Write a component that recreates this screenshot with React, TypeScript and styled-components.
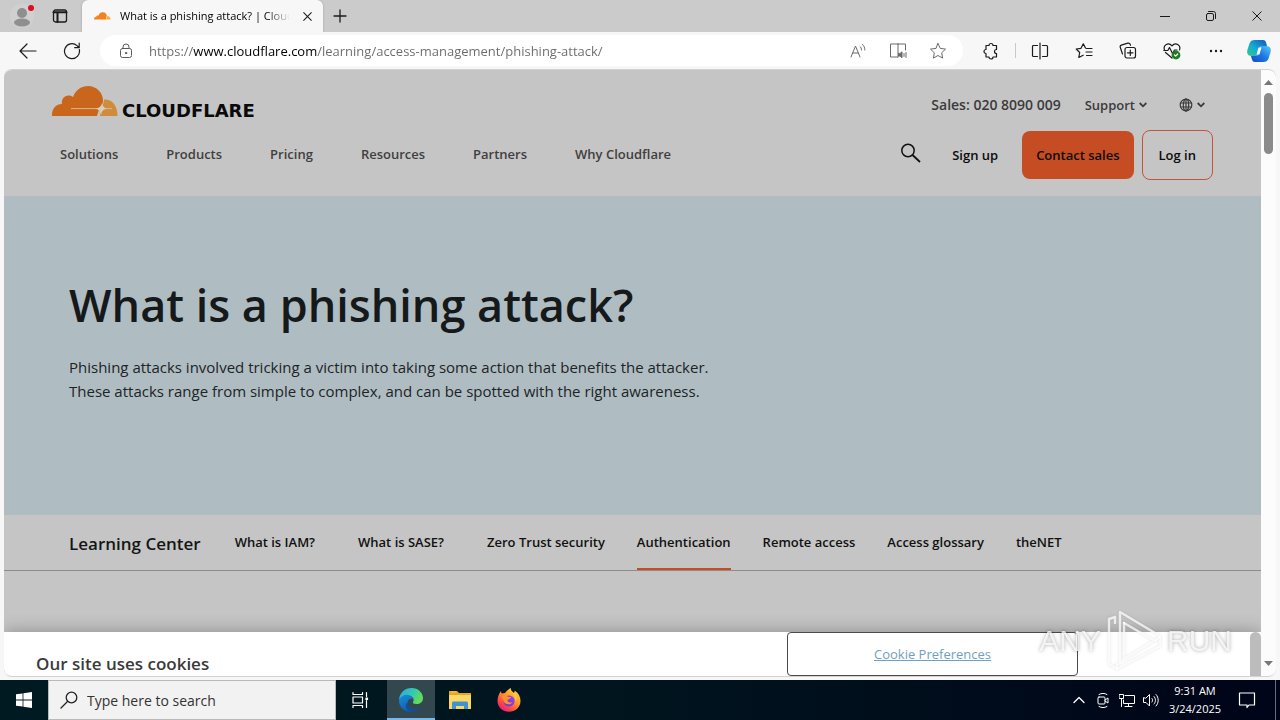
import React from "react";
import styled, { createGlobalStyle } from "styled-components";

const GlobalStyle = createGlobalStyle`
  * { box-sizing: border-box; }
  body { margin: 0; font-family: "Open Sans", "Noto Sans", sans-serif; color: #1a1a1a; }
  button, input { font: inherit; color: inherit; }
  button { border: 0; padding: 0; background: none; }
  a { color: inherit; text-decoration: none; }
  svg { display: block; flex: none; }
`;

const Desktop = styled.div`
  display: flex;
  flex-direction: column;
  height: 100vh;
  overflow: hidden;
  background: #f7f7f7;
`;

/* ---------- browser chrome ---------- */

const TabStrip = styled.header`
  display: flex;
  flex: none;
  height: 32px;
  background: #cbcbcb;
`;

const ChromeButton = styled.button<{ $width?: number; $color?: string }>`
  display: flex;
  flex: none;
  align-items: center;
  justify-content: center;
  width: ${(p) => p.$width ?? 44}px;
  color: ${(p) => p.$color ?? "#1b1b1b"};
`;

const Tab = styled.div`
  display: flex;
  flex: none;
  align-items: center;
  gap: 9px;
  width: 241px;
  padding: 0 8px 0 12px;
  border-radius: 6px 6px 0 0;
  background: #f7f7f7;
  box-shadow: 0 0 2px #9a9a9a;
`;

const TabTitle = styled.span`
  flex: 1;
  min-width: 0;
  white-space: nowrap;
  font-size: 11px;
  line-height: 16px;
  color: #000;
  mask-image: linear-gradient(90deg, #000 86%, transparent);
`;

const WindowControls = styled.div`
  display: flex;
  margin-left: auto;
`;

const Toolbar = styled.div`
  display: flex;
  flex: none;
  align-items: stretch;
  height: 37px;
  padding: 3px 0 3px 6px;
  background: #f7f7f7;
`;

const AddressBar = styled.form`
  display: flex;
  flex: 1;
  min-width: 0;
  align-items: center;
  margin: 0 6px;
  padding: 0 5px 0 17px;
  border-radius: 16px;
  background: #fff;
  color: #5a5a5a;
`;

const AddressInput = styled.input`
  flex: 1;
  min-width: 0;
  height: 24px;
  margin-left: 14px;
  padding: 0;
  border: 0;
  outline: 0;
  font-size: 13px;
  color: #111;
  background: linear-gradient(90deg, #6a6a6a 44px, #000 44px, #000 168px, #6a6a6a 168px);
  background-clip: text;
  -webkit-background-clip: text;
  -webkit-text-fill-color: transparent;
`;

const AddressActions = styled.div`
  display: flex;
  align-self: stretch;
`;

const Divider = styled.span`
  width: 1px;
  margin: 8px 2px;
  background: #c9c9c9;
`;

/* ---------- web page ---------- */

const Viewport = styled.div`
  display: flex;
  flex: 1;
  min-height: 0;
  margin: 0 4px 3px;
  border: 1px solid #d2d2d4;
  border-width: 1px 0;
  border-radius: 8px;
  overflow: hidden;
  background: #fcfcfc;
`;

const Page = styled.div`
  position: relative;
  flex: 1;
  min-width: 0;
  overflow: hidden;
  background: #c5c5c5;
`;

const ScrollTrack = styled.div`
  display: flex;
  flex: none;
  flex-direction: column;
  align-items: center;
  width: 15px;
  padding: 8px 0 9px;
`;

const ScrollThumb = styled.span`
  width: 9px;
  height: 61px;
  margin: 7px 0 auto;
  border-radius: 5px;
  background: #8b8b8b;
`;

const SiteHeader = styled.div`
  height: 126px;
  padding: 15px 48px 0;
`;

const HeaderRow = styled.div<{ $height: number }>`
  display: flex;
  align-items: center;
  justify-content: space-between;
  height: ${(p) => p.$height}px;
`;

const Logo = styled.a`
  display: flex;
  align-items: flex-end;
  gap: 4px;
  height: 32px;
`;

const Wordmark = styled.span`
  font-family: "DejaVu Sans", sans-serif;
  font-size: 18px;
  font-weight: 700;
  line-height: 12px;
  color: #0a0a0a;
`;

const Utility = styled.div`
  display: flex;
  align-items: center;
  gap: 24px;
  padding: 8px 8px 0 0;
  font-size: 14px;
  font-weight: 600;
  line-height: 20px;
  color: #3b3b3b;
`;

const UtilityButton = styled.button`
  display: flex;
  align-items: center;
  gap: 4px;
  font-size: 13px;
  & + & { margin-left: 8px; }
`;

const Nav = styled.nav`
  display: flex;
  gap: 48px;
  padding: 0 0 2px 8px;
  font-size: 13px;
  font-weight: 600;
  line-height: 20px;
  color: #3f3f3f;
`;

const Account = styled.div`
  display: flex;
  align-items: center;
  gap: 8px;
`;

const SearchButton = styled.button`
  margin-right: 6px;
`;

const PillButton = styled.button<{ $kind: "plain" | "solid" | "outline" }>`
  height: ${(p) => (p.$kind === "outline" ? 50 : 48)}px;
  padding: 0 ${(p) => (p.$kind === "solid" ? 14 : 16)}px;
  border: ${(p) => (p.$kind === "outline" ? "1px solid #c8513a" : "0")};
  border-radius: 8px;
  background: ${(p) => (p.$kind === "solid" ? "#c64c24" : "transparent")};
  color: #0c0c0c;
  font-size: 13px;
  font-weight: 600;
`;

const Hero = styled.section`
  height: 319px;
  padding: 74px 65px 0;
  background: #afbdc2;
`;

const HeroTitle = styled.h1`
  margin: 0;
  font-size: 45px;
  font-weight: 600;
  line-height: 70px;
  color: #15191a;
`;

const HeroText = styled.p`
  max-width: 680px;
  margin: 15px 0 0;
  font-size: 15px;
  line-height: 24px;
  color: #1d2426;
`;

const LearningBar = styled.nav`
  display: flex;
  align-items: stretch;
  gap: 32px;
  height: 56px;
  padding: 0 65px;
  border-bottom: 1px solid #8c8c8c;
`;

const LearningTitle = styled.a`
  margin-right: 2px;
  font-size: 17px;
  font-weight: 600;
  line-height: 58px;
  color: #151515;
`;

const LearningLink = styled.a<{ $active?: boolean; $wide?: boolean }>`
  margin-right: ${(p) => (p.$wide ? 11 : 0)}px;
  border-bottom: 2px solid ${(p) => (p.$active ? "#c64c24" : "transparent")};
  font-size: 13px;
  font-weight: 600;
  line-height: 54px;
  color: #111;
  white-space: nowrap;
`;

const CookieBanner = styled.section`
  position: absolute;
  inset: auto 0 0;
  display: flex;
  justify-content: space-between;
  height: 44px;
  padding-left: 32px;
  background: #fff;
  box-shadow: 0 0 18px rgba(0, 0, 0, 0.3);
`;

const CookieTitle = styled.h2`
  margin: 0;
  padding-top: 20px;
  font-size: 17px;
  font-weight: 600;
  line-height: 24px;
  color: #3a3a3a;
`;

const CookieActions = styled.div`
  display: flex;
  gap: 172px;
`;

const CookieButton = styled.button`
  width: 291px;
  height: 44px;
  border: 1px solid #4a4a4a;
  border-radius: 4px;
  font-size: 13px;
  color: #6f9fc4;
  text-decoration: underline;
`;

const InnerThumb = styled.span`
  width: 11px;
  border-radius: 6px 6px 0 0;
  background: #bcbcbc;
`;

const Watermark = styled.div`
  position: absolute;
  right: 48px;
  bottom: 46px;
  display: flex;
  align-items: center;
  gap: 4px;
  height: 66px;
  font-family: "Liberation Sans", sans-serif;
  font-size: 30px;
  line-height: 66px;
  color: rgba(255, 255, 255, 0.75);
  text-shadow: 0 0 4px rgba(0, 0, 0, 0.25);
  filter: drop-shadow(0 0 1px rgba(0, 0, 0, 0.15));
  pointer-events: none;
`;

/* ---------- taskbar ---------- */

const Taskbar = styled.footer`
  display: flex;
  flex: none;
  height: 40px;
  background: linear-gradient(90deg, #001a22, #00141e 50%, #000418);
  color: #fff;
`;

const TaskButton = styled.button<{ $active?: boolean; $width?: number }>`
  display: flex;
  flex: none;
  align-items: center;
  justify-content: center;
  width: ${(p) => p.$width ?? 48}px;
  border-bottom: 2px solid ${(p) => (p.$active ? "#76b9ed" : "transparent")};
  border-top: 2px solid ${(p) => (p.$active ? "#33474e" : "transparent")};
  background: ${(p) => (p.$active ? "#33474e" : "transparent")};
  background-clip: padding-box;
`;

const TaskSearch = styled.label`
  display: flex;
  align-items: center;
  gap: 9px;
  width: 288px;
  padding-left: 11px;
  border: 1px solid #b9b9b9;
  background: #f2f2f2;
  color: #222;
`;

const TaskSearchInput = styled.input`
  flex: 1;
  min-width: 0;
  padding: 0;
  border: 0;
  outline: 0;
  background: none;
  font-size: 14px;
  &::placeholder { color: #333; opacity: 1; }
`;

const PinnedApps = styled.div`
  display: flex;
  gap: 1px;
  margin-left: 3px;
`;

const Tray = styled.div`
  display: flex;
  margin-left: auto;
  padding-right: 4px;
`;

const Clock = styled.time`
  width: 64px;
  padding-top: 2px;
  font-size: 11px;
  line-height: 18px;
  text-align: center;
`;

const ShowDesktop = styled.span`
  width: 1px;
  margin-left: 8px;
  background: #66707a;
`;

/* ---------- icons ---------- */

type IconProps = { size?: number; stroke?: number; children: React.ReactNode };

const Icon = ({ size = 20, stroke = 1, children }: IconProps) => (
  <svg width={size} height={size} viewBox={`0 0 ${size} ${size}`} fill="none" stroke="currentColor" strokeWidth={stroke} strokeLinecap="round" strokeLinejoin="round" aria-hidden="true">
    {children}
  </svg>
);

const ProfileIcon = () => (
  <svg width="28" height="28" viewBox="0 0 28 28" aria-hidden="true">
    <circle cx="14" cy="14" r="12" fill="#d0d0d0" />
    <circle cx="14" cy="11" r="5" fill="#8f8f8f" />
    <ellipse cx="14" cy="20.500" rx="8" ry="4" fill="#8f8f8f" />
    <circle cx="23" cy="6" r="3" fill="#e00b1c" />
  </svg>
);

const WorkspacesIcon = () => (
  <Icon size={16} stroke={1.3}>
    <rect x="1.500" y="2" width="13" height="12" rx="2" />
    <path d="M1.500 4.200h13M5.500 4.500V14" strokeWidth="2" />
  </Icon>
);

const CloudFavicon = () => (
  <svg width="17" height="10" viewBox="0 0 17 10" aria-hidden="true">
    <path d="M0 8.500C0 6.800 1 6 2.300 5.800 2.500 4.600 3.600 4.300 4.400 4.700 5.300 2 7.200 1 9 1.200c2.200.2 3.500 1.600 3.800 3.400L12 8.500z" fill="#f4811f" />
    <path d="M12.300 8.500l1-3.600c2 0 3.200 1.500 3.300 3.600z" fill="#faad3f" />
  </svg>
);

const CloseIcon = ({ size = 10, stroke = 1.2 }: { size?: number; stroke?: number }) => (
  <svg width={size} height={size} viewBox="0 0 10 10" stroke="currentColor" strokeWidth={stroke} aria-hidden="true">
    <path d="M.5.5l9 9M9.500.5l-9 9" />
  </svg>
);

const ChevronDown = () => (
  <svg width="8" height="6" viewBox="0 0 8 6" fill="none" stroke="currentColor" strokeWidth="1.800" aria-hidden="true">
    <path d="M.7 1L4 4.300 7.300 1" />
  </svg>
);

const CloudLogo = () => (
  <svg width="66" height="32" viewBox="0 0 66 32" aria-hidden="true">
    <path d="M0 31C-.3 24 3.500 19.200 10 19c-1.200-6 5-11 11-7C24 4.500 29.500 1 36 1c8.500 0 15 7 15 14.500 0 3.500-1.500 6-3.800 8.200L45 31z" fill="#c9661b" />
    <path d="M48 31c.3-5-1-6-3-7.500 5-1 7-4 7-9 7.500-.5 13.500 5 13.500 16.500z" fill="#cf8d3c" />
    <path d="M19 23.600h41" stroke="#dcb58e" strokeWidth="1" />
    <path d="M50 17.500c.5 4 2 5.500 5.500 6-4 .6-6 2.500-6.500 7-1-4.500-2-6.400-6-7 4.500-.5 6.500-2 7-6z" fill="#d8cdbf" />
  </svg>
);

const SearchIcon = () => (
  <svg width="22" height="26" viewBox="0 0 22 26" fill="none" stroke="#111" strokeWidth="1.500" aria-hidden="true">
    <circle cx="8" cy="8.500" r="6.200" />
    <path d="M12.500 13l7.500 7" strokeWidth="1.800" />
  </svg>
);

const GlobeIcon = () => (
  <Icon size={14} stroke={1.2}>
    <circle cx="7" cy="7" r="5.800" />
    <ellipse cx="7" cy="7" rx="2.700" ry="5.800" />
    <path d="M1.500 5h11M1.500 9h11M7 1v12" />
  </Icon>
);

const CopilotIcon = () => (
  <svg width="26" height="26" viewBox="0 0 26 26" aria-hidden="true">
    <defs>
      <linearGradient id="cpA" x1="0" y1="1" x2="1" y2="0">
        <stop offset="0" stopColor="#35c98a" />
        <stop offset=".45" stopColor="#15a9d6" />
        <stop offset="1" stopColor="#1556b8" />
      </linearGradient>
      <linearGradient id="cpB" x1="0" y1="1" x2="1" y2="0">
        <stop offset="0" stopColor="#1747c4" />
        <stop offset=".5" stopColor="#1d78e6" />
        <stop offset="1" stopColor="#54cdf5" />
      </linearGradient>
    </defs>
    <path d="M9 2h8c2 0 2.600 1.200 3.200 3l.8 3h-4c-2 0-3 .8-3.600 2.600L11 18H5.500C1.500 18 .5 15 1.500 11.500l2-6C4.300 3 6 2 9 2z" fill="url(#cpA)" />
    <path d="M17 24H9c-2 0-2.600-1.200-3.200-3L5 18h4c2 0 3-.8 3.600-2.600L15 8h5.500c4 0 5 3 4 6.500l-2 6C21.700 23 20 24 17 24z" fill="url(#cpB)" />
    <path d="M12.500 9.500h3l-2 7h-3z" fill="#f2fbff" />
  </svg>
);

const EdgeIcon = () => (
  <svg width="26" height="26" viewBox="0 0 26 26" aria-hidden="true">
    <defs>
      <linearGradient id="edA" x1="0" y1="0" x2="1" y2=".4">
        <stop offset="0" stopColor="#2aa8e0" />
        <stop offset=".6" stopColor="#35c9b0" />
        <stop offset="1" stopColor="#63dc55" />
      </linearGradient>
      <linearGradient id="edB" x1="0" y1="0" x2=".6" y2="1">
        <stop offset="0" stopColor="#1a90dc" />
        <stop offset="1" stopColor="#0c55a8" />
      </linearGradient>
    </defs>
    <path d="M1 13C1.500 5.500 7 1 13.500 1 20.500 1 25 6 25 11c0 4-3 6-6.500 6-3 0-4-1-3.500-2 1.500-2 .5-6-4-6C6 9 2 11 1 13z" fill="url(#edA)" />
    <path d="M1 13C2.500 9.500 6 7.500 9.500 7.800c3 .2 5.500 2 6 4.500C14 11 9.500 12 9.500 16c0 4.500 5 7.500 9.500 6 1.500-.5 2.500-1.200 3.500-1.800C20.500 23 17 25 13 25 6 25 .6 19.500 1 13z" fill="url(#edB)" />
    <path d="M9.500 15c-.5 5 4.500 8.500 9.500 7 1.500-.5 2.500-1.200 3.500-1.800C20.500 23 17 25 13.500 25 9 24 6 19 9.500 15z" fill="#134f93" />
  </svg>
);

const ExplorerIcon = () => (
  <svg width="24" height="22" viewBox="0 0 24 22" aria-hidden="true">
    <path d="M1 2h8l2 2h12v16H1z" fill="#e6a821" />
    <path d="M1 6h22v14H1z" fill="#fcd667" />
    <path d="M4 20v-6c0-1 .6-1.600 1.600-1.600h12.800c1 0 1.600.6 1.600 1.600v6h-4v-3H8v3z" fill="#3f94d0" />
    <path d="M3 3h5" stroke="#f5c74f" strokeWidth="1" />
  </svg>
);

const FirefoxIcon = () => (
  <svg width="24" height="24" viewBox="0 0 24 24" aria-hidden="true">
    <defs>
      <linearGradient id="ffA" x1=".9" y1="0" x2=".2" y2="1">
        <stop offset="0" stopColor="#ffe449" />
        <stop offset=".45" stopColor="#ff9626" />
        <stop offset=".8" stopColor="#fb3a50" />
        <stop offset="1" stopColor="#e31587" />
      </linearGradient>
      <linearGradient id="ffB" x1="1" y1="0" x2="0" y2="1">
        <stop offset="0" stopColor="#a23cf0" />
        <stop offset="1" stopColor="#5a3fd6" />
      </linearGradient>
    </defs>
    <path d="M4 3c0 1 .2 1.800.7 2.500L8 5c1.500-2 3.500-4 6-5-.5 2 1 3.500 3 5 .6-1 .6-1.500.5-2.400C21.500 5 23.500 9 23.500 13c0 6-5 10.800-11.500 10.800S.5 19 .5 13C.5 9 2 5.500 4 3z" fill="url(#ffA)" />
    <circle cx="12" cy="13" r="5.600" fill="url(#ffB)" />
    <path d="M5 8c2.500-1 4.500-.5 6 .8 1.500 0 3 .2 3 1-.3 1.200-3 1.200-3.500 2.400 0 2 2.500 3 5 1.700C14 17.500 8 17 6.500 13z" fill="#ff8f2a" />
    <path d="M14 4c3 2 5 5.500 4 9 1-.6 1.500-1.500 1.500-2.600C20.500 7 17 4.500 14 4z" fill="#ffd43e" />
  </svg>
);

const WindowsIcon = () => (
  <svg width="16" height="16" viewBox="0 0 16 16" fill="#fff" aria-hidden="true">
    <path d="M0 2.300L6.600 1.400V7.600H0zM7.400 1.300L16 0V7.600H7.400zM0 8.400H6.600V14.600L0 13.700zM7.400 8.400H16V16L7.400 14.700z" />
  </svg>
);

const PlayMark = () => (
  <svg width="58" height="64" viewBox="0 0 58 64" fill="none" stroke="#fff" strokeOpacity=".75" strokeWidth="2.500" strokeLinejoin="round" strokeLinecap="round" aria-hidden="true">
    <path d="M15 52V3L55 27L50 32L19 14" />
    <path d="M19 14V50L47 33" />
    <path d="M55 28V37L12 60V54" />
    <path d="M10 14V8L4 10V55L12 60" />
  </svg>
);

const navItems = ["Solutions", "Products", "Pricing", "Resources", "Partners", "Why Cloudflare"];

const learningItems = [
  { label: "What is IAM?", wide: true },
  { label: "What is SASE?", wide: true },
  { label: "Zero Trust security" },
  { label: "Authentication", active: true },
  { label: "Remote access" },
  { label: "Access glossary" },
  { label: "theNET" },
];

export default function App() {
  return (
    <Desktop>
      <GlobalStyle />
      <TabStrip>
        <ChromeButton aria-label="Profile"><ProfileIcon /></ChromeButton>
        <ChromeButton $width={32} aria-label="Workspaces"><WorkspacesIcon /></ChromeButton>
        <ChromeButton as="span" $width={6} />
        <Tab>
          <CloudFavicon />
          <TabTitle>What is a phishing attack? | Cloud</TabTitle>
          <ChromeButton $width={16} aria-label="Close tab"><CloseIcon size={9} /></ChromeButton>
        </Tab>
        <ChromeButton $width={34} aria-label="New tab">
          <Icon size={14} stroke={1.3}><path d="M7 1v12M1 7h12" /></Icon>
        </ChromeButton>
        <WindowControls>
          <ChromeButton $width={46} aria-label="Minimize"><Icon size={10}><path d="M0 5.500h10" /></Icon></ChromeButton>
          <ChromeButton $width={46} aria-label="Restore">
            <Icon size={10}><rect x=".5" y="2.500" width="7" height="7" rx="1.500" /><path d="M2.500.5h5a2 2 0 0 1 2 2v5" /></Icon>
          </ChromeButton>
          <ChromeButton $width={46} aria-label="Close"><CloseIcon stroke={1} /></ChromeButton>
        </WindowControls>
      </TabStrip>

      <Toolbar>
        <ChromeButton aria-label="Back"><Icon size={18} stroke={1.2}><path d="M17 9H1.500M8 2L1 9l7 7" /></Icon></ChromeButton>
        <ChromeButton aria-label="Refresh">
          <Icon size={18} stroke={1.2}><path d="M16.300 7.500A7.500 7.500 0 1 1 14 3.600L16 5.500M16.200 1.200v4.500h-4.500" /></Icon>
        </ChromeButton>
        <AddressBar onSubmit={(e) => e.preventDefault()}>
          <Icon size={18}><rect x="3.500" y="6.500" width="11" height="9" rx="2" /><path d="M6 6.500V5a3 3 0 0 1 6 0v1.500" /><circle cx="9" cy="11" r=".7" fill="currentColor" /></Icon>
          <AddressInput aria-label="Address" defaultValue="https://www.cloudflare.com/learning/access-management/phishing-attack/" />
          <AddressActions>
            <ChromeButton type="button" $width={40} $color="#6b6b6b" aria-label="Read aloud">
              <Icon size={18}><path d="M2 15L6.500 4 11 15M3.700 11h5.600M11 4.500c1 .8 1.500 2 1.500 3.500M13.500 2.500c1.500 1.200 2.300 3 2.300 5.500" /></Icon>
            </ChromeButton>
            <ChromeButton type="button" $width={40} $color="#6b6b6b" aria-label="Immersive reader">
              <Icon size={18}><path d="M9 2v13M9 2H1.500v13H9M9 2h7.500v6" /><path d="M9.500 11.500V14H11l2 1.800V9.800l-2 1.700z" fill="currentColor" /><path d="M15 11.500v3M17 10.500v5" /></Icon>
            </ChromeButton>
            <ChromeButton type="button" $width={40} $color="#6b6b6b" aria-label="Add to favorites">
              <Icon size={18}><path d="M9 1.500l2.300 4.900 5.200.7-3.800 3.700.9 5.300L9 13.500l-4.600 2.600.9-5.300L1.500 7.100l5.200-.7z" /></Icon>
            </ChromeButton>
          </AddressActions>
        </AddressBar>
        <ChromeButton aria-label="Extensions">
          <Icon size={18} stroke={1.2}><path d="M4 3.500h3a2 2 0 0 1 4 0h3.500v4a2 2 0 0 0 0 4v3.500H11a2 2 0 0 1-4 0H4v-3.500a2 2 0 1 1 0-4z" /></Icon>
        </ChromeButton>
        <Divider />
        <ChromeButton aria-label="Split screen">
          <Icon size={18} stroke={1.2}><path d="M9 1v16M6.500 3.500h-4a1 1 0 0 0-1 1v9a1 1 0 0 0 1 1h4M11.500 3.500h4a1 1 0 0 1 1 1v9a1 1 0 0 1-1 1h-4" /></Icon>
        </ChromeButton>
        <ChromeButton aria-label="Favorites">
          <Icon size={18} stroke={1.2}><path d="M10.500 6L8.300 1.800 6 6.300l-4.800.7 3.500 3.500-.9 5 4.400-2.300M11.500 6.500h5.500M11 10h6M11.500 13.500h5.500" /></Icon>
        </ChromeButton>
        <ChromeButton aria-label="Collections">
          <Icon size={18} stroke={1.2}><rect x="6" y="5.500" width="10.500" height="10.500" rx="2" /><path d="M11.300 8v5.500M8.500 10.800H14M3.500 12L1.300 5.500c-.4-1.200 0-2 1-2.400l6.500-1.900c1.200-.3 2 .1 2.400 1.100l.3 1" /></Icon>
        </ChromeButton>
        <ChromeButton aria-label="Browser essentials">
          <Icon size={18} stroke={1.2}>
            <path d="M1.500 8C-.3 3 5.500-.3 9 3.800 12.500-.3 18.300 3 16.500 8M2.500 10.500L9 16M.8 8.500h4L6.500 5.500l3 6 2-3.500H14" />
            <circle cx="13" cy="13" r="3.800" fill="#1e7b24" stroke="#1e7b24" /><path d="M11.500 13l1.200 1.200 2-2.200" stroke="#fff" />
          </Icon>
        </ChromeButton>
        <ChromeButton aria-label="Settings and more">
          <svg width="14" height="4" viewBox="0 0 14 4" fill="currentColor" aria-hidden="true"><circle cx="2" cy="2" r="1.200" /><circle cx="7" cy="2" r="1.200" /><circle cx="12" cy="2" r="1.200" /></svg>
        </ChromeButton>
        <ChromeButton $width={42} aria-label="Copilot"><CopilotIcon /></ChromeButton>
      </Toolbar>

      <Viewport>
        <Page>
          <SiteHeader>
            <HeaderRow $height={32}>
              <Logo href="#" aria-label="Cloudflare"><CloudLogo /><Wordmark>CLOUDFLARE</Wordmark></Logo>
              <Utility>
                <a href="#sales">Sales: 020 8090 009</a>
                <UtilityButton>Support <ChevronDown /></UtilityButton>
                <UtilityButton aria-label="Language"><GlobeIcon /><ChevronDown /></UtilityButton>
              </Utility>
            </HeaderRow>
            <HeaderRow $height={76}>
              <Nav>{navItems.map((n) => <a key={n} href={`#${n}`}>{n}</a>)}</Nav>
              <Account>
                <SearchButton aria-label="Search"><SearchIcon /></SearchButton>
                <PillButton $kind="plain">Sign up</PillButton>
                <PillButton $kind="solid">Contact sales</PillButton>
                <PillButton $kind="outline">Log in</PillButton>
              </Account>
            </HeaderRow>
          </SiteHeader>
          <Hero>
            <HeroTitle>What is a phishing attack?</HeroTitle>
            <HeroText>
              Phishing attacks involved tricking a victim into taking some action that benefits the attacker. These attacks range
              from simple to complex, and can be spotted with the right awareness.
            </HeroText>
          </Hero>
          <LearningBar>
            <LearningTitle href="#learning">Learning Center</LearningTitle>
            {learningItems.map((l) => (
              <LearningLink key={l.label} href="#" $active={l.active} $wide={l.wide}>{l.label}</LearningLink>
            ))}
          </LearningBar>
          <CookieBanner>
            <CookieTitle>Our site uses cookies</CookieTitle>
            <CookieActions>
              <CookieButton>Cookie Preferences</CookieButton>
              <InnerThumb />
            </CookieActions>
          </CookieBanner>
        </Page>
        <ScrollTrack>
          <svg width="9" height="8" viewBox="0 0 9 8" fill="#777" aria-hidden="true"><path d="M4.500 2L9 7H0z" /></svg>
          <ScrollThumb />
          <svg width="9" height="8" viewBox="0 0 9 8" fill="#777" aria-hidden="true"><path d="M4.500 7L9 2H0z" /></svg>
        </ScrollTrack>
      </Viewport>

      <Watermark><span>ANY</span><PlayMark /><span>RUN</span></Watermark>

      <Taskbar>
        <TaskButton aria-label="Start"><WindowsIcon /></TaskButton>
        <TaskSearch>
          <Icon size={18} stroke={1.3}><circle cx="11.500" cy="6.500" r="5.300" /><path d="M7.500 10.500L1 17" /></Icon>
          <TaskSearchInput placeholder="Type here to search" aria-label="Type here to search" />
        </TaskSearch>
        <TaskButton aria-label="Task view">
          <Icon size={18} stroke={1.2}><path d="M2 1.500v2h9.500v-2M2 16.500v-2h9.500v2M15.500 1.500v4M15.500 9.500v7" /><rect x="2" y="6" width="9.500" height="6" /><rect x="15" y="7" width="1.500" height="1.500" fill="#fff" /></Icon>
        </TaskButton>
        <PinnedApps>
          <TaskButton $active aria-label="Edge"><EdgeIcon /></TaskButton>
          <TaskButton aria-label="File Explorer"><ExplorerIcon /></TaskButton>
          <TaskButton aria-label="Firefox"><FirefoxIcon /></TaskButton>
        </PinnedApps>
        <Tray>
          <TaskButton $width={24} aria-label="Show hidden icons"><Icon size={12} stroke={1.3}><path d="M1 8.500l5-5 5 5" /></Icon></TaskButton>
          <TaskButton $width={24} aria-label="Meet now">
            <Icon size={16}><rect x="3" y="5" width="7" height="7" rx="1" /><path d="M10 8l3-2v5l-3-2M4 2.500c2.500-1.500 5.500-1.500 8 0M4 14.500c2.500 1.500 5.500 1.500 8 0" /></Icon>
          </TaskButton>
          <TaskButton $width={24} aria-label="Network">
            <Icon size={16}><path d="M6 3.500h9.500v8H4.500V8M9.500 11.500v3M6 14.500h7" /><rect x=".5" y="2.500" width="4" height="4" /><path d="M2.500 6.500v8" /></Icon>
          </TaskButton>
          <TaskButton $width={24} aria-label="Volume">
            <Icon size={16}><path d="M.5 6v4.500H3L6.500 14V2.500L3 6zM9 6.500c.8 1 .8 2.500 0 3.500M11 4.500c2 2 2 5.500 0 7.500M13 2.500c3 3 3 8.500 0 11.500" /></Icon>
          </TaskButton>
          <Clock>9:31 AM<br />3/24/2025</Clock>
          <TaskButton $width={40} aria-label="Notifications">
            <Icon size={18} stroke={1.2}><path d="M1.500 2h15v12h-5.500L9 16.500V14H1.500z" /></Icon>
          </TaskButton>
          <ShowDesktop />
        </Tray>
      </Taskbar>
    </Desktop>
  );
}
